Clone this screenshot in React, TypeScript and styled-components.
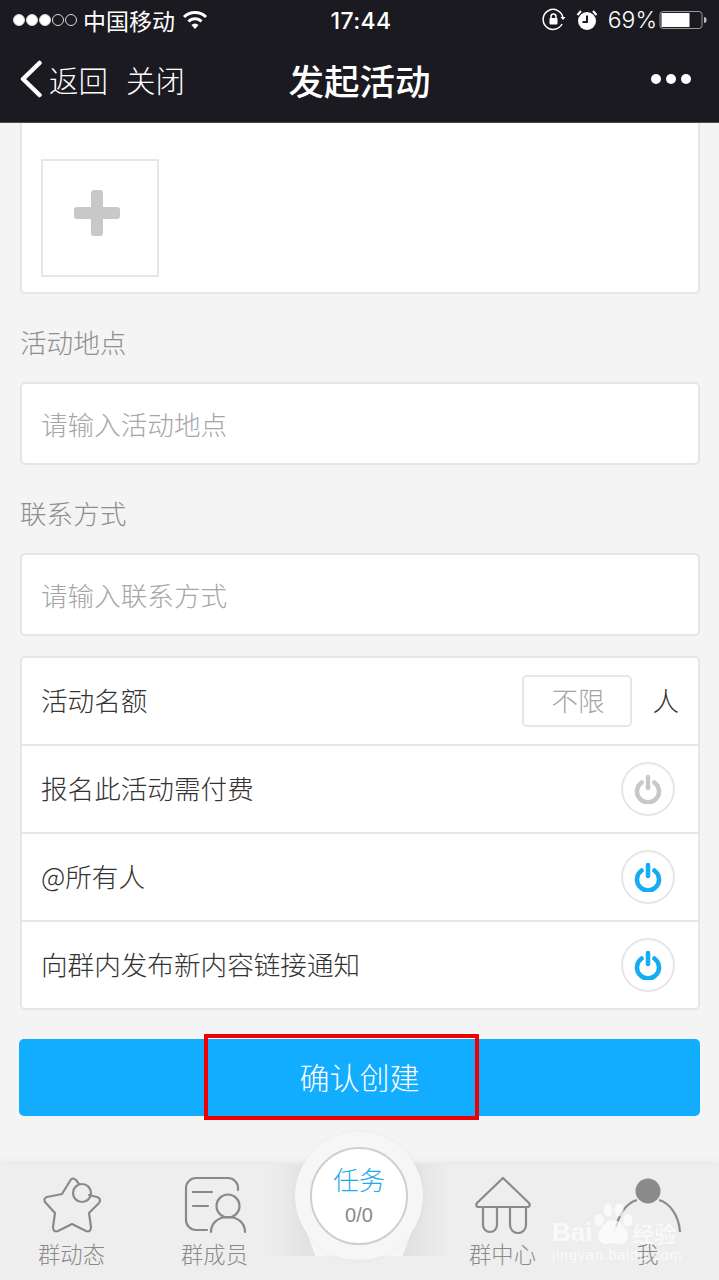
import React from 'react';
import styled, { createGlobalStyle } from 'styled-components';

const GlobalStyle = createGlobalStyle`
  html, body { margin: 0; padding: 0; }
  body {
    background: #f4f4f4;
    font-family: "Noto Sans CJK SC", "Liberation Sans", sans-serif;
  }
  * { box-sizing: border-box; }
`;

const Page = styled.div`
  position: relative;
  width: 719px;
  height: 1280px;
  overflow: hidden;
  background: #f4f4f4;
  display: flex;
  flex-direction: column;
`;

const Header = styled.header`
  height: 123px;
  flex: none;
  background: #1b1a20;
  color: #fff;
  display: flex;
  flex-direction: column;
  border-bottom: 1px solid #4a4a4d;
`;

const StatusBar = styled.div`
  height: 40px;
  padding: 0 10px 0 13px;
  display: grid;
  grid-template-columns: 1fr auto 1fr;
  align-items: center;
  font-size: 23px;
`;

const StatusLeft = styled.div`
  display: flex;
  align-items: center;
  gap: 7px;
`;

const StatusRight = styled.div`
  display: flex;
  align-items: center;
  justify-content: flex-end;
  gap: 10px;
`;

const Signal = styled.div`
  display: flex;
  gap: 1px;
  margin-right: -1px;
`;

const Dot = styled.span<{ $on: boolean }>`
  width: 12px;
  height: 12px;
  border-radius: 50%;
  border: 1px solid #d8d8d8;
  background: ${(p) => (p.$on ? '#fff' : 'transparent')};
`;

const Clock = styled.div`
  font-family: Inter, "Liberation Sans", sans-serif;
  font-size: 23px;
  font-weight: 500;
  letter-spacing: 0.4px;
  padding-top: 1px;
`;

const Percent = styled.span`
  font-family: Inter, "Liberation Sans", sans-serif;
  font-size: 23px;
  font-weight: 300;
  margin-right: -8px;
`;

const NavBar = styled.div`
  flex: 1;
  padding: 0 28px 4px 19px;
  display: grid;
  grid-template-columns: 1fr auto 1fr;
  align-items: center;
`;

const NavLeft = styled.div`
  display: flex;
  align-items: center;
  font-size: 29.5px;
  font-weight: 300;
`;

const BackText = styled.span`
  margin-left: 6px;
  margin-right: 18px;
`;

const NavTitle = styled.div`
  padding-left: 9px;
  font-size: 35.5px;
  font-weight: 500;
`;

const More = styled.div`
  display: flex;
  justify-content: flex-end;
  gap: 5px;
`;

const MoreDot = styled.span`
  width: 10px;
  height: 10px;
  border-radius: 50%;
  background: #fff;
`;

const Content = styled.main`
  flex: 1;
  padding: 0 19px 0 20px;
  display: flex;
  flex-direction: column;
`;

const Card = styled.section`
  background: #fff;
  border: 2px solid #e6e6e6;
  border-radius: 5px;
`;

const UploadCard = styled(Card)`
  height: 171px;
  flex: none;
  border-top: none;
  border-radius: 0 0 5px 5px;
  padding: 36px 0 0 19px;
`;

const UploadBox = styled.div`
  width: 118px;
  height: 118px;
  padding: 0 6px 10px 0;
  border: 2px solid #e6e6e6;
  display: flex;
  align-items: center;
  justify-content: center;
`;

const FieldLabel = styled.div`
  height: 88px;
  flex: none;
  padding-top: 6px;
  display: flex;
  align-items: center;
  font-size: 26.6px;
  font-weight: 300;
  color: #8e8e8e;
`;

const InputCard = styled(Card)`
  height: 83px;
  flex: none;
  padding-left: 19px;
  display: flex;
  align-items: center;
  font-size: 26.6px;
  font-weight: 300;
  color: #a6a6a6;
`;

const OptionsCard = styled(Card)`
  margin-top: 20px;
  height: 354px;
  flex: none;
`;

const OptionRow = styled.div`
  height: 88px;
  padding: 0 23px 0 19px;
  display: flex;
  align-items: center;
  justify-content: space-between;
  font-size: 26.6px;
  font-weight: 300;
  color: #333;
  &:first-child { height: 86px; }
  & + & { border-top: 2px solid #e6e6e6; }
`;

const OptionLabel = styled.span`
  padding-bottom: 4px;
`;

const Quota = styled.div`
  display: flex;
  align-items: center;
  gap: 20px;
  margin-right: -4px;
`;

const QuotaInput = styled.div`
  width: 110px;
  height: 52px;
  border: 2px solid #e6e6e6;
  border-radius: 5px;
  padding: 0 0 3px 27px;
  display: flex;
  align-items: center;
  color: #a6a6a6;
`;

const PowerToggle = styled.div<{ $on: boolean }>`
  width: 54px;
  height: 54px;
  border-radius: 50%;
  border: 2px solid #e6e6e6;
  display: flex;
  align-items: center;
  justify-content: center;
  color: ${(p) => (p.$on ? '#12adf3' : '#c8c8c8')};
`;

const ConfirmButton = styled.button`
  margin: 29px 0 0 -1px;
  height: 77px;
  flex: none;
  padding: 0 0 4px;
  border: none;
  border-radius: 5px;
  background: #12adff;
  color: #fff;
  font-family: inherit;
  font-size: 30px;
  font-weight: 300;
`;

const Highlight = styled.div`
  position: absolute;
  left: 204px;
  top: 1034px;
  width: 275px;
  height: 86px;
  border: 4px solid #f00000;
`;

const TabBar = styled.nav`
  height: 117px;
  flex: none;
  background: #eeeeee;
  border-top: 1px solid #e8e8e8;
  box-shadow: 0 -3px 6px rgba(0, 0, 0, 0.03);
  display: grid;
  grid-template-columns: 143px 143px 143px 147px 143px;
`;

const Tab = styled.div`
  display: flex;
  flex-direction: column;
  align-items: center;
  padding-top: 12px;
  font-size: 22.3px;
  font-weight: 300;
  color: #8a8a8a;
  line-height: 30px;
  svg { display: block; margin-bottom: 4px; }
`;

const TaskSlot = styled.div`
  position: relative;
`;

const TaskShade = styled.div`
  position: absolute;
  left: -20px;
  top: 0;
  width: 186px;
  height: 92px;
  background: linear-gradient(90deg, transparent, rgba(0, 0, 0, 0.06) 27%, rgba(0, 0, 0, 0.06) 73%, transparent);
`;

const TaskTail = styled.div`
  position: absolute;
  left: 14px;
  top: 51px;
  width: 118px;
  height: 41px;
  background: #f6f6f6;
  clip-path: polygon(0 0, 100% 0, 87% 100%, 13% 100%);
`;

const TaskHalo = styled.div`
  position: absolute;
  left: 9px;
  top: -32px;
  width: 128px;
  height: 128px;
  border-radius: 50%;
  background: #f6f6f6;
  box-shadow: 0 0 6px rgba(0, 0, 0, 0.04);
  display: flex;
  align-items: center;
  justify-content: center;
`;

const TaskCircle = styled.div`
  width: 98px;
  height: 98px;
  border-radius: 50%;
  background: #fff;
  border: 2px solid #cfcfcf;
  display: flex;
  flex-direction: column;
  align-items: center;
  justify-content: center;
`;

const TaskTitle = styled.div`
  font-size: 26px;
  font-weight: 300;
  line-height: 30px;
  margin-bottom: 8px;
  color: #1fa9ec;
`;

const TaskCount = styled.div`
  font-family: "Liberation Sans", sans-serif;
  font-size: 20px;
  line-height: 26px;
  color: #8a8a8a;
`;

const Watermark = styled.div`
  position: absolute;
  left: 552px;
  top: 1203px;
  width: 128px;
  color: rgba(255, 255, 255, 0.7);
  pointer-events: none;
`;

const WatermarkMain = styled.div`
  display: flex;
  align-items: center;
  margin-top: 16px;
  height: 26px;
  font-family: "Liberation Sans", sans-serif;
  font-size: 26px;
  font-weight: 700;
  white-space: nowrap;
`;

const WatermarkDu = styled.span`
  margin-left: 5px;
  color: #eeeeee;
`;

const WatermarkCn = styled.span`
  font-family: "Noto Sans CJK SC", sans-serif;
  font-size: 22px;
  font-weight: 500;
  margin-left: 3px;
`;

const WatermarkSub = styled.div`
  margin-top: 2px;
  font-family: "Liberation Sans", sans-serif;
  font-size: 14.5px;
  letter-spacing: 0.8px;
  line-height: 16px;
  white-space: nowrap;
`;

const Paw = styled.svg`
  position: absolute;
  left: 41px;
  top: 0;
`;

const Power = () => (
  <svg width="30" height="30" viewBox="0 0 30 30" fill="none" stroke="currentColor" strokeWidth="4.5" strokeLinecap="round">
    <path d="M8.6 8.5a11 11 0 1 0 12.8 0" />
    <path d="M15 3v11" />
  </svg>
);

const App = () => (
  <Page>
    <GlobalStyle />
    <Header>
      <StatusBar>
        <StatusLeft>
          <Signal>
            {[true, true, true, false, false].map((on, i) => (
              <Dot key={i} $on={on} />
            ))}
          </Signal>
          <span>中国移动</span>
          <svg width="26" height="20" viewBox="0 0 26 20" fill="none" stroke="#fff" strokeWidth="3">
            <path d="M2 7a15.500 15.500 0 0 1 22 0" />
            <path d="M6.500 11.500a9.200 9.200 0 0 1 13 0" />
            <path d="M13 19l-3.600-4a5 5 0 0 1 7.200 0z" fill="#fff" stroke="none" />
          </svg>
        </StatusLeft>
        <Clock>17:44</Clock>
        <StatusRight>
          <svg width="24" height="24" viewBox="0 0 24 24" fill="none" stroke="#fff" strokeWidth="1.500">
            <path d="M20 16a10 10 0 1 1 1-6" />
            <path d="M18.500 9h5l-2.500 3z" fill="#fff" stroke="none" />
            <rect x="7.500" y="10" width="8" height="6.500" rx="1" fill="#fff" stroke="none" />
            <path d="M9 10V8.500a2.500 2.500 0 0 1 5 0V10" />
          </svg>
          <svg width="22" height="22" viewBox="0 0 22 22" fill="none">
            <circle cx="11" cy="12" r="9" fill="#fff" />
            <path d="M11 6.500V13H6.500" stroke="#1b1a20" strokeWidth="2" />
            <path d="M1.500 6l3.500-4M20.500 6L17 2" stroke="#fff" strokeWidth="2.200" />
          </svg>
          <Percent>69%</Percent>
          <svg width="50" height="20" viewBox="0 0 50 20" fill="none">
            <rect x="1" y="1.500" width="42" height="17" rx="3" stroke="#9a9a9a" />
            <rect x="2.500" y="3" width="28" height="14" fill="#fff" />
            <path d="M45 7c2 .3 2.600 1.400 2.600 3s-.6 2.700-2.600 3z" fill="#bbb" />
          </svg>
        </StatusRight>
      </StatusBar>
      <NavBar>
        <NavLeft>
          <svg width="24" height="38" viewBox="0 0 24 38" fill="none" stroke="#fff" strokeWidth="4.500" strokeLinecap="round" strokeLinejoin="round">
            <path d="M20.500 3L4 19l16.500 16" />
          </svg>
          <BackText>返回</BackText>
          <span>关闭</span>
        </NavLeft>
        <NavTitle>发起活动</NavTitle>
        <More>
          <MoreDot />
          <MoreDot />
          <MoreDot />
        </More>
      </NavBar>
    </Header>
    <Content>
      <UploadCard>
        <UploadBox>
          <svg width="46" height="46" viewBox="0 0 46 46">
            <path d="M17 3a3 3 0 0 1 3-3h6a3 3 0 0 1 3 3v14h14a3 3 0 0 1 3 3v6a3 3 0 0 1-3 3H29v14a3 3 0 0 1-3 3h-6a3 3 0 0 1-3-3V29H3a3 3 0 0 1-3-3v-6a3 3 0 0 1 3-3h14z" fill="#c8c8c8" />
          </svg>
        </UploadBox>
      </UploadCard>
      <FieldLabel>活动地点</FieldLabel>
      <InputCard>请输入活动地点</InputCard>
      <FieldLabel>联系方式</FieldLabel>
      <InputCard>请输入联系方式</InputCard>
      <OptionsCard>
        <OptionRow>
          <OptionLabel>活动名额</OptionLabel>
          <Quota>
            <QuotaInput>不限</QuotaInput>
            <OptionLabel>人</OptionLabel>
          </Quota>
        </OptionRow>
        <OptionRow>
          <OptionLabel>报名此活动需付费</OptionLabel>
          <PowerToggle $on={false}><Power /></PowerToggle>
        </OptionRow>
        <OptionRow>
          <OptionLabel>@所有人</OptionLabel>
          <PowerToggle $on><Power /></PowerToggle>
        </OptionRow>
        <OptionRow>
          <OptionLabel>向群内发布新内容链接通知</OptionLabel>
          <PowerToggle $on><Power /></PowerToggle>
        </OptionRow>
      </OptionsCard>
      <ConfirmButton>确认创建</ConfirmButton>
    </Content>
    <TabBar>
      <Tab>
        <svg width="62" height="58" viewBox="0 0 62 58" fill="none" stroke="#8a8a8a" strokeWidth="2.200" strokeLinejoin="round" strokeLinecap="round">
          <path d="M38 8l-3-4c-2-2-5-2-6 1l-8 13L6 21c-3 1-3 3-2 5l10 11-2 14c0 4 2 5 5 4l14-7 14 7c3 1 5 0 5-4l-2-14 10-10c2-3 1-5-2-6l-8-2" />
          <circle cx="41" cy="17" r="9" />
        </svg>
        群动态
      </Tab>
      <Tab>
        <svg width="62" height="58" viewBox="0 0 62 58" fill="none" stroke="#8a8a8a" strokeWidth="2.200" strokeLinecap="round">
          <path d="M23 54H12a10 10 0 0 1-10-10V12A10 10 0 0 1 12 2h32a10 10 0 0 1 10 10v2" />
          <path d="M9 16h19M9 30h15" />
          <circle cx="44" cy="30" r="11.500" />
          <path d="M27 56c0-9 7-15 17-15s17 6 17 15" />
        </svg>
        群成员
      </Tab>
      <TaskSlot>
        <TaskShade />
        <TaskTail />
        <TaskHalo>
          <TaskCircle>
            <TaskTitle>任务</TaskTitle>
            <TaskCount>0/0</TaskCount>
          </TaskCircle>
        </TaskHalo>
      </TaskSlot>
      <Tab>
        <svg width="62" height="58" viewBox="0 0 62 58" fill="none" stroke="#8a8a8a" strokeWidth="2.200" strokeLinejoin="round">
          <path d="M31 2L5 27c-1.500 2-.5 4 1.500 4h49c2 0 3-2 1.500-4z" />
          <path d="M11 31v18a7 7 0 0 0 14 0V31M38 31v18a8 8 0 0 0 16 0V31" />
        </svg>
        群中心
      </Tab>
      <Tab>
        <svg width="72" height="58" viewBox="0 0 72 58" fill="none" stroke="#8a8a8a" strokeWidth="2.200">
          <path d="M3.500 56C5 40 14 27 25 24M47 24C58 27 67 40 68 56" />
          <circle cx="36" cy="15" r="12.500" fill="#8a8a8a" stroke="none" />
        </svg>
        我
      </Tab>
    </TabBar>
    <Highlight />
    <Watermark>
      <Paw width="40" height="44" viewBox="0 0 40 44" fill="currentColor">
        <ellipse cx="6" cy="17" rx="4.500" ry="6" />
        <ellipse cx="15" cy="7" rx="4.500" ry="6.500" />
        <ellipse cx="26" cy="7" rx="4.500" ry="6.500" />
        <ellipse cx="35" cy="17" rx="4.500" ry="6" />
        <path d="M20 17c6 0 9 5 13 10 4 6 1 14-6 14-3 0-5-1-7-1s-4 1-7 1c-7 0-10-8-6-14 4-5 7-10 13-10z" />
      </Paw>
      <WatermarkMain>
        Bai
        <WatermarkDu>du</WatermarkDu>
        <WatermarkCn>经验</WatermarkCn>
      </WatermarkMain>
      <WatermarkSub>jingyan.baidu.com</WatermarkSub>
    </Watermark>
  </Page>
);

export default App;
